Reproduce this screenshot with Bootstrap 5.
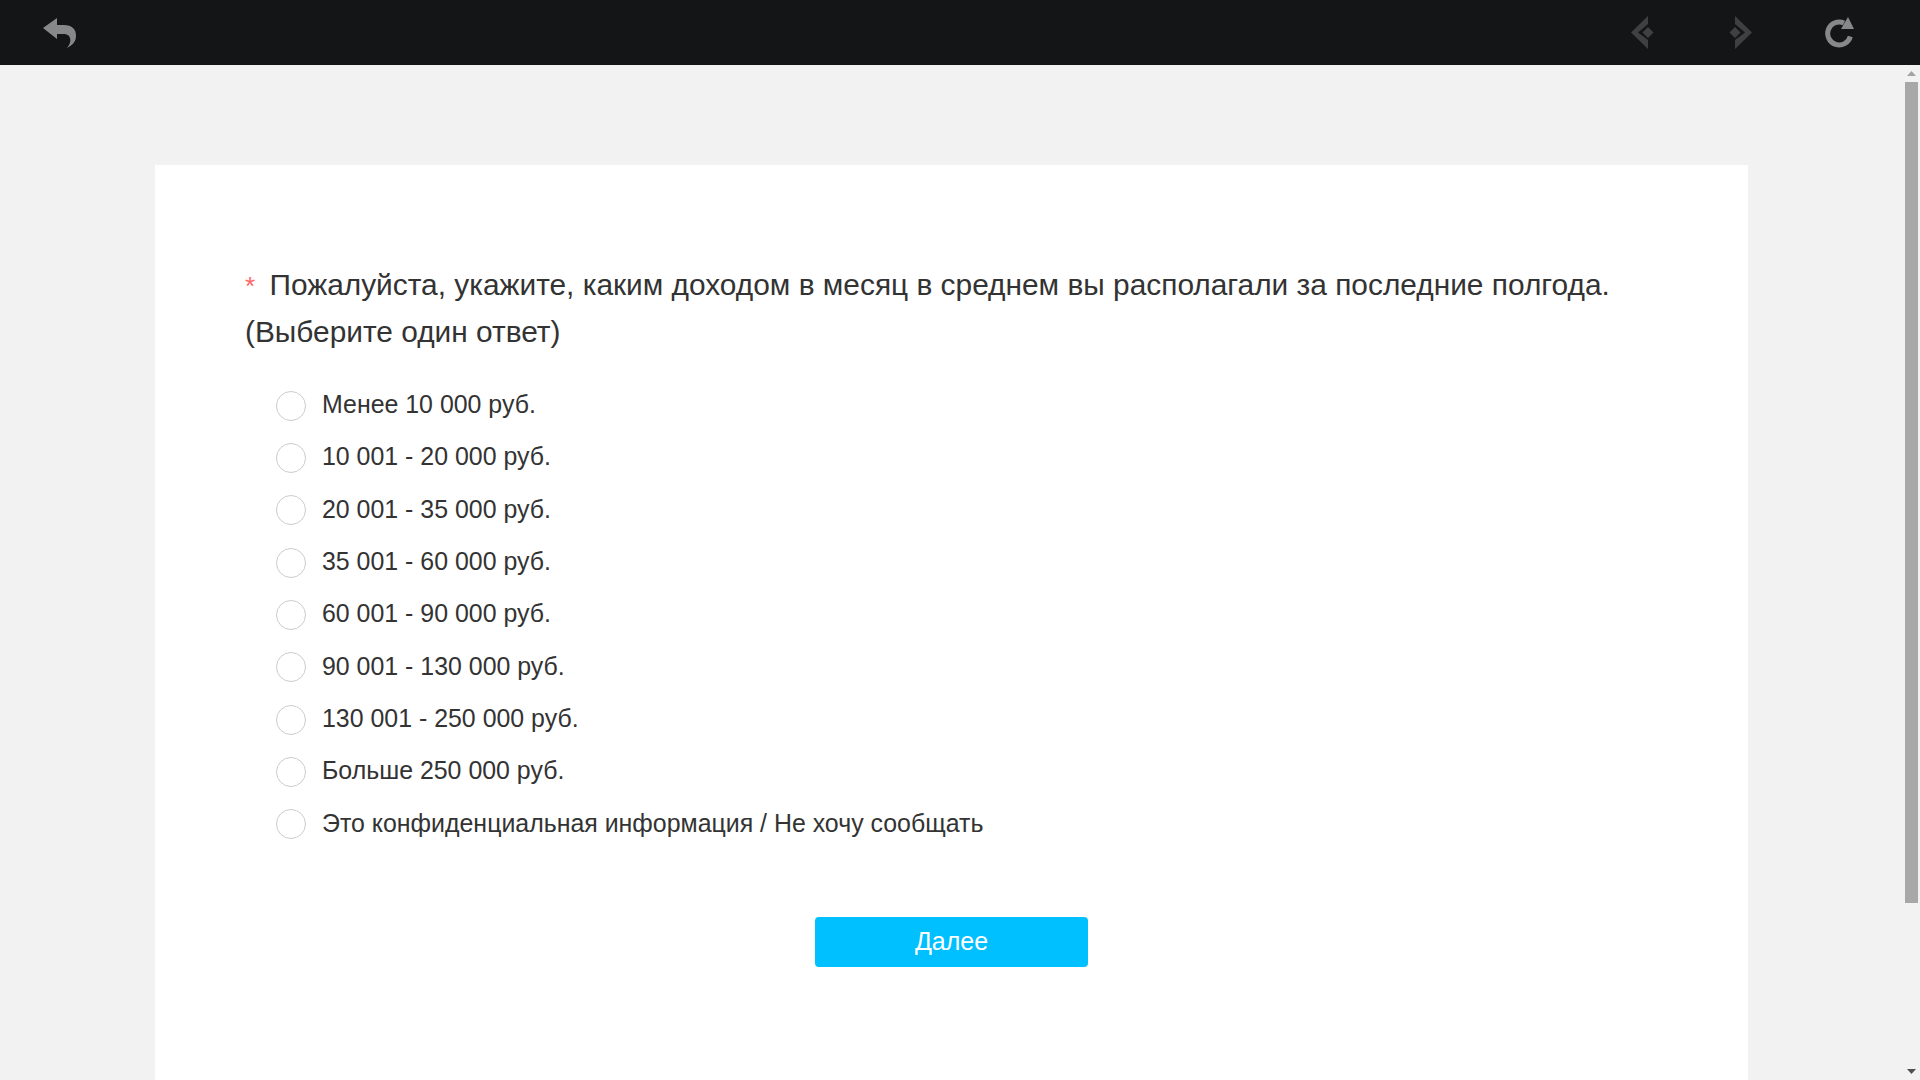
<!DOCTYPE html>
<html lang="ru"><head><meta charset="utf-8"><title>Опрос</title>
<link href="https://cdn.jsdelivr.net/npm/bootstrap@5.3.0/dist/css/bootstrap.min.css" rel="stylesheet">
<style>
html,body{height:1080px;overflow:hidden;background:#f2f2f2;font-family:"Liberation Sans",Arial,sans-serif}
.topbar{height:65px;background:#131517}
.topbar svg{display:block}
.ic-back{margin-left:43px}
.ic-prev{margin-right:75px}
.ic-next{margin-right:73px}
.ic-reload{margin-right:66px}
.stage{height:1015px;overflow:hidden}
.pagearea{flex:1;padding:100px 155px 0 155px;overflow:hidden}
.sheet{background:#fff;height:1000px;width:1593px;padding:95.5px 90px 0 90px}
.qtext{font-size:29.87px;line-height:47.6px;color:#333;margin:0 0 24px}
.req{color:#f66;font-size:26px;line-height:1;margin-right:6px}
.opt{height:52.3px;padding-left:31px;gap:16px;color:#333;font-size:24.92px}
.opt-label{padding-bottom:2px}
.dot{width:30px;height:30px;border:1px solid #ccc;border-radius:50%;background:#fff;flex:none}
.nextbtn{width:273px;height:50px;background:#00c0ff;color:#fff;border:0;border-radius:4px;font-size:25px;padding:0 0 1px;margin-top:67px}
.nextbtn:hover{background:#00c0ff;color:#fff}
.sbar{width:17px;background:#f2f2f2;flex:none}
.thumb{width:13px;height:821px;background:#a8a8a8;margin:0 auto}
.arr{height:17px}
</style></head><body>
<nav class="topbar d-flex align-items-center">
<svg class="ic-back" width="34" height="32" viewBox="0 0 34 32"><path fill="#87888a" d="M0 11 14 1V8H21C29 8 33 12 33 19 33 24 30 28 24 31 27 27 28 24 27 21 26 18 24 17 20 17H14V22Z"/></svg>
<div class="ms-auto d-flex align-items-center">
<svg class="ic-prev" width="23" height="33" viewBox="0 0 23 33"><path fill="#3f4042" d="M17 0 0 16.500 17 33V24L7 16.500 17 8Z"/><path fill="#3f4042" d="M17 11 22.500 16.500 17 22 11.500 16.500Z"/></svg>
<svg class="ic-next" width="23" height="33" viewBox="0 0 23 33"><path fill="#3f4042" d="M6 0 23 16.500 6 33V24L16 16.500 6 8Z"/><path fill="#3f4042" d="M6 11 11.500 16.500 6 22 .5 16.500Z"/></svg>
<svg class="ic-reload" width="29" height="31" viewBox="0 0 29 31"><path fill="none" stroke="#87888a" stroke-width="5" d="M25.300 19.500A11.500 11.500 0 1 1 19 6"/><path fill="#87888a" d="M23 0 29 12H16Z"/></svg>
</div>
</nav>
<div class="stage d-flex">
<main class="pagearea">
<div class="sheet">
<p class="qtext"><span class="req">*</span> Пожалуйста, укажите, каким доходом в месяц в среднем вы располагали за последние полгода. (Выберите один ответ)</p>
<div class="opt d-flex align-items-center"><span class="dot"></span><span class="opt-label">Менее 10 000 руб.</span></div>
<div class="opt d-flex align-items-center"><span class="dot"></span><span class="opt-label">10 001 - 20 000 руб.</span></div>
<div class="opt d-flex align-items-center"><span class="dot"></span><span class="opt-label">20 001 - 35 000 руб.</span></div>
<div class="opt d-flex align-items-center"><span class="dot"></span><span class="opt-label">35 001 - 60 000 руб.</span></div>
<div class="opt d-flex align-items-center"><span class="dot"></span><span class="opt-label">60 001 - 90 000 руб.</span></div>
<div class="opt d-flex align-items-center"><span class="dot"></span><span class="opt-label">90 001 - 130 000 руб.</span></div>
<div class="opt d-flex align-items-center"><span class="dot"></span><span class="opt-label">130 001 - 250 000 руб.</span></div>
<div class="opt d-flex align-items-center"><span class="dot"></span><span class="opt-label">Больше 250 000 руб.</span></div>
<div class="opt d-flex align-items-center"><span class="dot"></span><span class="opt-label">Это конфиденциальная информация / Не хочу сообщать</span></div>
<div class="text-center"><button class="btn nextbtn" type="button">Далее</button></div>
</div>
</main>
<aside class="sbar d-flex flex-column">
<div class="arr d-flex align-items-center justify-content-center"><svg width="9" height="5" viewBox="0 0 9 5"><path fill="#a3a3a3" d="M4.500 0 9 5H0Z"/></svg></div>
<div class="thumb"></div>
<div class="arr d-flex align-items-center justify-content-center mt-auto"><svg width="9" height="5" viewBox="0 0 9 5"><path fill="#505050" d="M0 0H9L4.500 5Z"/></svg></div>
</aside>
</div>
<script src="https://cdn.jsdelivr.net/npm/bootstrap@5.3.0/dist/js/bootstrap.bundle.min.js"></script>
</body></html>
